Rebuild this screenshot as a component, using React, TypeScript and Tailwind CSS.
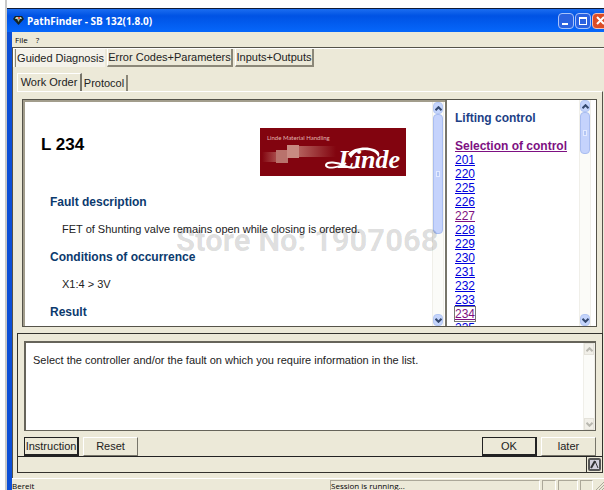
import type { ReactNode } from "react";

const codes = ["201", "220", "225", "226", "227", "228", "229", "230", "231", "232", "233", "234", "235"];

function Chevron({ up, color }: { up?: boolean; color: string }) {
  return (
    <svg width="7" height="5" viewBox="0 0 7 5" fill="none" stroke={color} strokeWidth="2">
      <path d={up ? "M0.5 4.2 3.5 1.2 6.5 4.2" : "M0.5 0.8 3.5 3.8 6.5 0.8"} />
    </svg>
  );
}

function ScrollBar({ thumb, disabled }: { thumb?: string; disabled?: boolean }) {
  const arrow = disabled
    ? "flex h-3 w-full shrink-0 items-center justify-center border border-[#e4e2da] bg-[#f1efe8]"
    : "flex h-3 w-full shrink-0 items-center justify-center rounded-sm border border-[#b4c7f4] bg-[#c5d5fc]";
  const color = disabled ? "#b9b8b0" : "#34496f";
  return (
    <div className="flex w-3 shrink-0 flex-col border-x border-[#f0efe9] bg-[#fbfbf8]">
      <button aria-label="Scroll up" className={arrow}>
        <Chevron up color={color} />
      </button>
      <div className="min-h-0 flex-1">
        {thumb && (
          <div className={`flex items-center justify-center rounded-sm border border-[#a9bdf0] bg-[#c5d3fc] ${thumb}`}>
            <span className="h-1.5 w-1 border border-[#e3eaff] bg-[#b3c6f4]" />
          </div>
        )}
      </div>
      <button aria-label="Scroll down" className={arrow}>
        <Chevron color={color} />
      </button>
    </div>
  );
}

function LindeLogo() {
  return (
    <svg className="h-[48px] w-[146px] shrink-0" viewBox="0 0 146 48" role="img" aria-label="Linde Material Handling">
      <defs>
        <linearGradient id="fadeRight">
          <stop offset="0" stopColor="#b4625d" />
          <stop offset="1" stopColor="#82040f" />
        </linearGradient>
        <linearGradient id="fadeLeft">
          <stop offset="0" stopColor="#82040f" />
          <stop offset="1" stopColor="#a84a49" />
        </linearGradient>
      </defs>
      <rect width="146" height="48" fill="#82040f" />
      <rect x="2" y="24" width="14" height="10" fill="url(#fadeLeft)" />
      <rect x="38" y="18" width="38" height="11" fill="url(#fadeRight)" />
      <rect x="16" y="22" width="12" height="13" fill="#b9736c" />
      <rect x="27" y="17" width="12" height="13" fill="#c88a81" />
      <text x="7" y="12" fill="#e2b5b2" fontFamily="Lato, sans-serif" fontSize="6">
        Linde Material Handling
      </text>
      <text x="78" y="40" fill="#fff" fontFamily="'Liberation Serif', serif" fontSize="26" fontWeight="bold" fontStyle="italic">
        Linde
      </text>
      <path d="M88 26C93 19 107 18 114 21C119 23 121 26 118 29C117 25 112 22 105 22C98 22 94 25 91 30Z" fill="#fff" />
      <path d="M86 35C81 39 66 42 66 37C67 33 77 34 85 38C90 40 94 41 98 38" fill="none" stroke="#fff" strokeWidth="2" />
    </svg>
  );
}

function Heading({ children }: { children: ReactNode }) {
  return <h2 className="text-[12px] leading-[14px] font-bold text-[#0b3a6e]">{children}</h2>;
}

function StatusCell({ className, children }: { className: string; children?: ReactNode }) {
  return <div className={`h-[10px] border-x border-t border-r-white border-t-[#aca899] border-l-[#aca899] ${className}`}>{children}</div>;
}

const topTab = "h-[18px] border-r-2 border-b-2 border-[#8b8778] border-l border-l-white text-center leading-[16px] whitespace-nowrap";
const raised = "h-[19px] w-[55px] border border-t-white border-l-white border-r-[#77756a] border-b-[#77756a] leading-[17px] whitespace-nowrap";
const framed = "h-[19px] w-[55px] border border-r-2 border-b-2 border-[#222] leading-[16px] whitespace-nowrap";

export default function App() {
  return (
    <div className="flex h-screen overflow-hidden bg-white font-['Liberation_Sans',Arial,sans-serif] text-[11px] text-[#222]">
      <div className="ml-[5px] w-[2px] shrink-0 bg-[#c9c9c9]" />
      <div className="mt-2 flex min-w-0 flex-1 flex-col overflow-hidden border-t border-[#101c38] bg-[#ece9d8]">
        <header className="flex h-[23px] shrink-0 items-center bg-linear-to-b from-[#1b6df0] via-[#0052e4] via-30% to-[#0667fb] pl-1.5">
          <svg width="11" height="9" viewBox="0 0 11 9" aria-hidden="true">
            <path d="M2 0h7l2 3-5.500 6L0 3z" fill="#182421" />
            <path d="M3 1h5l1 2H2z" fill="#b9d2bd" />
            <path d="M4 3h3L5.500 6z" fill="#8fae96" />
            <path d="M5 1h2v2H5z" fill="#e45643" />
          </svg>
          <h1 className="ml-[3px] flex-1 font-['Open_Sans',sans-serif] text-[10px] leading-[14px] font-bold whitespace-nowrap text-white">
            PathFinder - SB 132(1.8.0)
          </h1>
          <div className="-mr-1 flex gap-px">
            <button aria-label="Minimize" className="flex size-4 items-end rounded-sm border border-[#a9c3fa] bg-[#2b62e0] p-[3px]">
              <span className="h-[2px] w-1.5 bg-white" />
            </button>
            <button aria-label="Maximize" className="size-4 rounded-sm border border-[#a9c3fa] bg-[#2b62e0] p-[3px]">
              <span className="block h-2 w-2 border border-t-2 border-white" />
            </button>
            <button aria-label="Close" className="flex size-4 items-center justify-center rounded-sm border border-[#f3c0b2] bg-[#dc4c26]">
              <svg width="9" height="9" viewBox="0 0 9 9" stroke="#fff" strokeWidth="2">
                <path d="M1 1 8 8M8 1 1 8" />
              </svg>
            </button>
          </div>
        </header>

        <div className="flex min-h-0 flex-1 flex-col border-l-[5px] border-[#0c4fd6]">
          <nav className="flex h-[15px] shrink-0 gap-2 pl-[3px] font-['Open_Sans',sans-serif] text-[8px] leading-[13px] text-black">
            <button>File</button>
            <button>?</button>
          </nav>

          <main className="flex min-h-0 flex-1 flex-col border-t border-l border-[#55534a]">
            <div className="flex items-start gap-0.5 border-t border-l border-white pl-px" role="tablist">
              <button role="tab" aria-selected="true" className="h-[18px] w-[90px] border-l border-[#8b8778] bg-[#f4f2ea] text-center leading-[17px] whitespace-nowrap">
                Guided Diagnosis
              </button>
              <button role="tab" className={`w-[126px] ${topTab}`}>Error Codes+Parameters</button>
              <button role="tab" className={`w-[79px] ${topTab}`}>Inputs+Outputs</button>
            </div>

            <div className="flex min-h-0 flex-1 flex-col pt-[6px] pr-px pb-[5px] pl-1">
              <div className="flex items-end" role="tablist">
                <button role="tab" aria-selected="true" className="h-[18px] w-[65px] border-t border-r-2 border-l border-t-white border-r-[#77756a] border-l-white text-center leading-[15px] whitespace-nowrap">
                  Work Order
                </button>
                <button role="tab" className="h-4 w-[46px] border-r-2 border-[#8b8778] text-center leading-[16px]">
                  Protocol
                </button>
              </div>

              <div className="flex min-h-0 flex-1 flex-col border-t border-r border-t-white border-r-[#55534a] px-[5px] pt-[7px] pb-[6px]">
                <div className="flex min-h-0 flex-1 border border-[#55534a] bg-white">
                  <section className="flex min-w-0 flex-1 border-t-2 border-l-2 border-[#a29d8c]">
                    <div className="min-w-0 flex-1 overflow-hidden pt-[26px] pl-4">
                      <div className="flex items-start">
                        <h1 className="w-[219px] pt-[5px] text-[17px] leading-[24px] font-bold text-black">L 234</h1>
                        <LindeLogo />
                      </div>
                      <div className="pt-[19px] pl-[9px]">
                        <Heading>Fault description</Heading>
                        <p className="py-[13px] pl-3 leading-[15px] whitespace-nowrap">
                          FET of Shunting valve remains open while closing is ordered.
                        </p>
                        <Heading>Conditions of occurrence</Heading>
                        <p className="py-[13px] pl-3 leading-[15px]">X1:4 &gt; 3V</p>
                        <Heading>Result</Heading>
                      </div>
                    </div>
                    <ScrollBar thumb="h-[120px]" />
                    <div className="w-px shrink-0" />
                  </section>
                  <aside className="flex w-[151px] shrink-0 border-l-2 border-[#77756a]">
                    <div className="min-w-0 flex-1 overflow-hidden pt-[11px] pl-2 text-[12px] leading-[14px] whitespace-nowrap">
                      <h2 className="mb-[14px] font-bold text-[#1d3f86]">Lifting control</h2>
                      <ul>
                        <li>
                          <a href="#selection" className="font-bold text-[#7d1082] underline">Selection of control</a>
                        </li>
                        {codes.map((code) => (
                          <li key={code}>
                            <a
                              href={`#${code}`}
                              className={
                                code === "234"
                                  ? "text-[#7d1082] underline outline outline-[#777]"
                                  : code === "227"
                                    ? "text-[#7d1082] underline"
                                    : "text-[#0000dd] underline"
                              }
                            >
                              {code}
                            </a>
                          </li>
                        ))}
                      </ul>
                    </div>
                    <ScrollBar thumb="h-[42px]" />
                    <div className="w-[5px] shrink-0" />
                  </aside>
                </div>
              </div>

              <div className="shrink-0 border border-[#33322d]">
                <div className="px-[6px] pt-[7px]">
                  <div className="flex h-[90px] border-2 border-r border-b border-[#66645a] bg-white">
                    <p className="flex-1 px-[7px] pt-[10px] leading-[15px]">
                      Select the controller and/or the fault on which you require information in the list.
                    </p>
                    <ScrollBar disabled />
                  </div>
                  <div className="flex gap-1 pt-[6px]">
                    <button className={framed}>Instruction</button>
                    <button className={raised}>Reset</button>
                    <span className="flex-1" />
                    <button className={framed}>OK</button>
                    <button className={raised}>later</button>
                  </div>
                </div>
                <div className="flex h-4 border-t border-[#222]">
                  <div className="flex-1 border-r border-[#33322d]" />
                  <button aria-label="Show details" className="m-px flex w-[13px] items-center justify-center rounded-xs border-2 border-[#555] bg-[#d4d1dc]">
                    <svg width="9" height="9" viewBox="0 0 9 9" fill="none" stroke="#333">
                      <path d="M5 1 8 8" strokeWidth="1" />
                      <path d="M1 8 5 1" strokeWidth="2" />
                    </svg>
                  </button>
                </div>
              </div>
            </div>
          </main>

          <footer className="flex h-3 shrink-0 gap-0.5 overflow-hidden border-t border-white pt-px font-['Open_Sans',sans-serif] text-[8px] leading-[9px] text-black">
            <span className="flex-1 pt-px">Bereit</span>
            <StatusCell className="w-[210px]">Session is running...</StatusCell>
            <StatusCell className="w-[14px]" />
            <StatusCell className="w-[20px]" />
            <StatusCell className="w-[13px]" />
            <svg width="9" height="10" viewBox="0 0 9 10" stroke="#aca899">
              <path d="M1 10 9 2M4 10 9 5M7 10 9 8" />
            </svg>
          </footer>
        </div>
      </div>

      <div className="pointer-events-none absolute top-[223px] left-[176px] font-['Roboto',sans-serif] text-[31px] leading-[36px] font-bold whitespace-nowrap text-black/15">
        Store No: 1907068
      </div>
    </div>
  );
}
